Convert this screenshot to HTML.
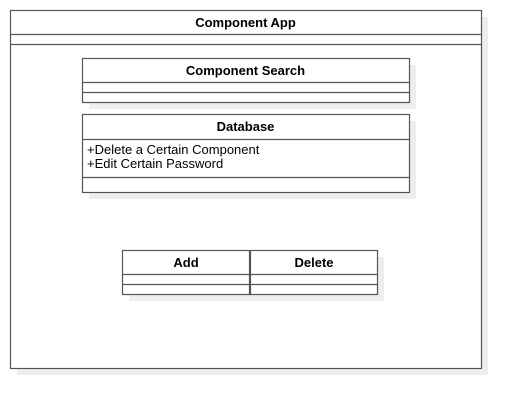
<!DOCTYPE html><html><head><style>body{margin:0;background:#fff}svg{display:block}text{font-family:"Liberation Sans",sans-serif;font-size:13px;fill:#000}</style></head><body>
<svg width="521" height="409" xmlns="http://www.w3.org/2000/svg">
<g fill="#eeeeee">
<rect x="17" y="17" width="471" height="358"/>
</g>
<g fill="#fff" stroke="#555" stroke-width="1.2">
<rect x="10.5" y="10.5" width="471" height="358"/>
</g>
<g stroke="#555" stroke-width="1.2"><line x1="10" y1="34.5" x2="481" y2="34.5"/><line x1="10" y1="44.5" x2="481" y2="44.5"/></g>
<text x="245.5" y="27" text-anchor="middle" font-weight="bold">Component App</text>
<g fill="#eeeeee"><rect x="89" y="65" width="327" height="44"/><rect x="89" y="121" width="327" height="78"/><rect x="129" y="257" width="255" height="44"/></g>
<g fill="#fff" stroke="#555" stroke-width="1.2">
<rect x="82.5" y="58.5" width="327" height="44"/>
<rect x="82.5" y="114.5" width="327" height="78"/>
<rect x="122.5" y="250.5" width="127" height="44"/>
<rect x="250.5" y="250.5" width="127" height="44"/>
</g>
<g stroke="#555" stroke-width="1.2">
<line x1="82" y1="82.5" x2="409" y2="82.5"/><line x1="82" y1="92.5" x2="409" y2="92.5"/>
<line x1="82" y1="139.5" x2="409" y2="139.5"/><line x1="82" y1="177.5" x2="409" y2="177.5"/>
<line x1="122" y1="274.5" x2="377" y2="274.5"/><line x1="122" y1="284.5" x2="377" y2="284.5"/>
</g>
<text x="245.5" y="75" text-anchor="middle" font-weight="bold">Component Search</text>
<text x="245.5" y="131" text-anchor="middle" font-weight="bold">Database</text>
<text x="87" y="154" font-size="12.5">+Delete a Certain Component</text>
<text x="87" y="168" font-size="12.5">+Edit Certain Password</text>
<text x="186" y="267" text-anchor="middle" font-weight="bold">Add</text>
<text x="314" y="267" text-anchor="middle" font-weight="bold">Delete</text>
</svg></body></html>
